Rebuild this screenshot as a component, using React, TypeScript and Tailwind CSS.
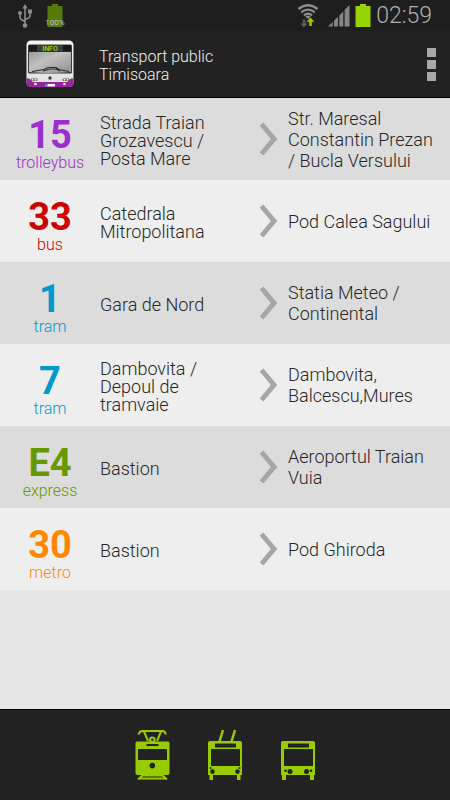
import React from 'react';
import clsx from 'clsx';

interface Route {
  line: string;
  kind: string;
  color: string;
  from: string;
  to: string;
}

const ROUTES: Route[] = [
  { line: '15', kind: 'trolleybus', color: 'text-[#9b2fce]', from: 'Strada Traian Grozavescu / Posta Mare', to: 'Str. Maresal Constantin Prezan / Bucla Versului' },
  { line: '33', kind: 'bus', color: 'text-[#cc0000]', from: 'Catedrala Mitropolitana', to: 'Pod Calea Sagului' },
  { line: '1', kind: 'tram', color: 'text-[#0099cc]', from: 'Gara de Nord', to: 'Statia Meteo / Continental' },
  { line: '7', kind: 'tram', color: 'text-[#0099cc]', from: 'Dambovita / Depoul de tramvaie', to: 'Dambovita, Balcescu,Mures' },
  { line: 'E4', kind: 'express', color: 'text-[#669900]', from: 'Bastion', to: 'Aeroportul Traian Vuia' },
  { line: '30', kind: 'metro', color: 'text-[#ff8800]', from: 'Bastion', to: 'Pod Ghiroda' },
];

const UsbIcon = () => (
  <svg width="16" height="24" viewBox="0 0 16 24" fill="none" stroke="#8c8c8c" strokeWidth="1.6">
    <path d="M8 4v17M3 10v3.5q0 1.5 1.5 2.2L8 17.5M13 8v4q0 1.3-1.4 2L8 15.5" />
    <path d="M8 0l2.6 4.4H5.4z" fill="#8c8c8c" stroke="none" />
    <circle cx="3" cy="9" r="2" fill="#8c8c8c" stroke="none" />
    <path d="M11 5.5h4v4h-4z" fill="#8c8c8c" stroke="none" />
    <circle cx="8" cy="21.5" r="2.3" fill="#8c8c8c" stroke="none" />
  </svg>
);

const BatteryIcon = ({ color }: { color: string }) => (
  <svg width="16" height="23" viewBox="0 0 16 23" fill={color}>
    <path d="M5 0h6v2h4.5v21H.5V2H5z" />
  </svg>
);

const WifiIcon = () => (
  <svg width="22" height="24" viewBox="0 0 22 24" fill="none">
    <g stroke="#8c8c8c" strokeWidth="2.3">
      <path d="M1.500 5q9.500-7.400 19 0" />
      <path d="M4.200 8.300q6.800-5.400 13.600 0" />
      <path d="M7 11.300q4-3.200 8 0" />
    </g>
    <path d="M8.200 12.600q2.800-1.800 5.600 0L11 15z" fill="#8c8c8c" />
    <path d="M5.800 15.500h2.600v4h2.200L7 23.500l-3.600-4h2.400z" fill="#5c5c5c" />
    <path d="M12.200 22v-4.200h-2.700l4-4.300 4 4.300h-2.700V22z" fill="#99cc00" />
  </svg>
);

const SignalIcon = () => (
  <svg width="22" height="22" viewBox="0 0 22 22" fill="#858585">
    <path d="M0 21.500L4.700 17v4.500zM6 15.700l4-4v9.800h-4zM11.300 10.400l4-4v15.100h-4zM16.600 5L21.500 0v21.500h-4.900z" />
  </svg>
);

const AppLogo = () => (
  <svg width="48" height="48" viewBox="0 0 48 48">
    <defs>
      <linearGradient id="shell" x1="0" y1="0" x2="0" y2="1">
        <stop offset="0" stopColor="#f6f6f6" />
        <stop offset="1" stopColor="#dedede" />
      </linearGradient>
      <linearGradient id="glass" x1="0" y1="0" x2="1" y2="1">
        <stop offset="0" stopColor="#8a8a8a" />
        <stop offset="0.450" stopColor="#bcbcbc" />
        <stop offset="1" stopColor="#8f8f8f" />
      </linearGradient>
      <clipPath id="body">
        <rect x="0.500" y="0.500" width="47" height="46.500" rx="4.500" />
      </clipPath>
    </defs>
    <g clipPath="url(#body)">
      <rect width="48" height="48" fill="url(#shell)" />
      <path d="M0 38.500h3l4 3.500h34l4-3.500h3V48H0z" fill="#97259c" />
    </g>
    <rect x="2" y="4.500" width="44" height="29" rx="1.500" fill="#3a3a3a" />
    <path d="M3 12h42v20q-21 1.800-42 0z" fill="url(#glass)" />
    <path d="M3 12h42Q24 16 10 27l-7 3z" fill="#ffffff" opacity="0.150" />
    <rect x="3" y="5" width="42" height="6.500" fill="#191919" />
    <rect x="11" y="5" width="26" height="6.500" fill="#3c3c3c" />
    <text x="24" y="11" textAnchor="middle" fontFamily="Roboto, sans-serif" fontWeight="500" fontSize="7" fill="#9bdc00">INFO</text>
    <path d="M6 31.500l12-2 4-2h8l3 2 10 2M17 31l7-2h6l4 2" stroke="#2c2c2c" strokeWidth="1.200" fill="none" />
    <circle cx="24" cy="38" r="1.700" fill="#3f3f3f" />
    <g fill="#5b5547">
      <rect x="4.500" y="38.500" width="7" height="2.500" rx="1.200" />
      <rect x="36.500" y="38.500" width="7" height="2.500" rx="1.200" />
    </g>
    <g fill="#fff1ca">
      <circle cx="6.500" cy="39.700" r="1" />
      <circle cx="9.500" cy="39.700" r="1" />
      <circle cx="9.500" cy="44" r="1.300" />
      <circle cx="41.500" cy="39.700" r="1" />
      <circle cx="38.500" cy="39.700" r="1" />
      <circle cx="38.500" cy="44" r="1.300" />
    </g>
    <rect x="19.500" y="44" width="9.500" height="2.500" fill="#f4f4f4" />
    <rect x="19.500" y="44" width="2" height="2.500" fill="#3c6fd0" />
  </svg>
);

const Chevron = () => (
  <svg className="shrink-0" width="18" height="34" viewBox="0 0 18 34" fill="none" stroke="#a6a6a6" strokeWidth="5">
    <path d="M1.500 2L14 17 1.500 32" />
  </svg>
);

const TramIcon = () => (
  <svg width="36" height="52" viewBox="0 0 36 52">
    <g fill="none" stroke="#99cc00" strokeWidth="2">
      <path d="M4.500 5.500Q5.500 2 8.500 2h20q2.500 0 3.500 3.500" />
      <path d="M10 2.500l4 9.500M27 2.500L23 12" />
      <circle cx="18.300" cy="10.700" r="2.300" />
      <path d="M9 46l-5 4.500M28 46l5 4.500M6 49.500h25M9 46.500h19" />
    </g>
    <path fillRule="evenodd" fill="#99cc00" d="M3 12.500h31q1.500 0 1.500 1.500v30q0 2-2 2h-30q-2 0-2-2V14q0-1.500 1.500-1.500zM12.500 15v2h12v-2zM4 20v11h29V20zM18.300 33.800a2.800 2.800 0 1 0 0 5.600 2.800 2.800 0 1 0 0-5.600z" />
  </svg>
);

const TrolleybusIcon = () => (
  <svg width="36" height="52" viewBox="0 0 36 52">
    <path d="M12.500 12.500L16 1M24.500 12.500L28 1" stroke="#99cc00" strokeWidth="2.500" />
    <path fillRule="evenodd" fill="#99cc00" d="M3 12h30q2 0 2 2v32h-1.500v5H30v-5H6v5H2.500v-5H1V14q0-2 2-2zM8 14.500v4h21v-4zM4 20v17h29V20zM5.500 40.300a2.300 2.300 0 1 0 0 4.600 2.300 2.300 0 1 0 0-4.600zM30.500 40.300a2.300 2.300 0 1 0 0 4.600 2.300 2.300 0 1 0 0-4.600zM3.500 38a1 1 0 1 0 0 2 1 1 0 1 0 0-2zM32.500 38a1 1 0 1 0 0 2 1 1 0 1 0 0-2z" />
  </svg>
);

const BusIcon = () => (
  <svg width="36" height="52" viewBox="0 0 36 52">
    <path fillRule="evenodd" fill="#99cc00" d="M3 12h30q2 0 2 2v32h-1v5h-4v-5H6v5H2v-5H1V14q0-2 2-2zM8 14.500v4h21v-4zM4 20v17h29V20zM10 40a2.500 2.500 0 1 0 0 5 2.500 2.500 0 1 0 0-5zM26.500 40a2.500 2.500 0 1 0 0 5 2.500 2.500 0 1 0 0-5zM5.500 40.500a1.300 1.300 0 1 0 0 2.600 1.300 1.300 0 1 0 0-2.600zM31 40.500a1.300 1.300 0 1 0 0 2.600 1.300 1.300 0 1 0 0-2.600z" />
  </svg>
);

const StatusBar = () => (
  <div className="flex h-[31px] items-center justify-between bg-[#1e1e1e] pr-[18px] pl-[17px]">
    <div className="flex items-center gap-[14px]">
      <UsbIcon />
      <div className="relative">
        <BatteryIcon color="#557a0c" />
        <span className="absolute bottom-0 left-1/2 -translate-x-1/2 text-[8px] leading-[8px] text-[#c4c4c4]">100%</span>
      </div>
    </div>
    <div className="flex items-center gap-[5px]">
      <WifiIcon />
      <div className="ml-1 flex">
        <SignalIcon />
      </div>
      <BatteryIcon color="#99d300" />
      <span className="text-[23px] leading-[28px] font-light text-[#b0b0b0]">02:59</span>
    </div>
  </div>
);

const RouteRow = ({ route, shaded }: { route: Route; shaded: boolean }) => (
  <li>
    <button
      type="button"
      className={clsx(
        'flex min-h-[82px] w-full items-center pr-3 text-left text-[18px] font-light text-[#262626]',
        shaded ? 'bg-[#dcdcdc]' : 'bg-[#eeeeee]'
      )}
    >
      <span className={clsx('flex w-[100px] shrink-0 flex-col pt-2 text-center', route.color)}>
        <span className="text-[38px] leading-[39px] font-bold">{route.line}</span>
        <span className="text-[16px] leading-[16px]">{route.kind}</span>
      </span>
      <span className="w-[140px] shrink-0 pt-1 leading-[18px]">{route.from}</span>
      <span className="flex w-12 shrink-0 pl-5">
        <Chevron />
      </span>
      <span className="flex-1 leading-[21px]">{route.to}</span>
    </button>
  </li>
);

export default function App() {
  return (
    <div className="flex min-h-screen flex-col bg-[#e5e5e5] font-[Roboto,sans-serif]">
      <StatusBar />

      {/* Action bar */}
      <header className="flex h-[67px] items-center border-b border-black bg-[#222222] pr-[14px] pl-[26px]">
        <AppLogo />
        <h1 className="ml-[25px] w-[130px] pt-1 text-[16px] leading-[18px] font-light text-[#f0f0f0]">Transport public Timisoara</h1>
        <button type="button" aria-label="More options" className="ml-auto flex flex-col gap-[3px]">
          <span className="h-[9px] w-[9px] bg-[#a8a8a8]" />
          <span className="h-[9px] w-[9px] bg-[#a8a8a8]" />
          <span className="h-[9px] w-[9px] bg-[#a8a8a8]" />
        </button>
      </header>

      <main className="flex-1">
        <ul>
          {ROUTES.map((route, i) => (
            <RouteRow key={route.line} route={route} shaded={i % 2 === 0} />
          ))}
        </ul>
      </main>

      {/* Vehicle filters */}
      <nav className="flex h-[91px] items-center justify-center gap-[37px] border-t border-black bg-[#222222]">
        <button type="button" aria-label="Trams">
          <TramIcon />
        </button>
        <button type="button" aria-label="Trolleybuses">
          <TrolleybusIcon />
        </button>
        <button type="button" aria-label="Buses">
          <BusIcon />
        </button>
      </nav>
    </div>
  );
}
